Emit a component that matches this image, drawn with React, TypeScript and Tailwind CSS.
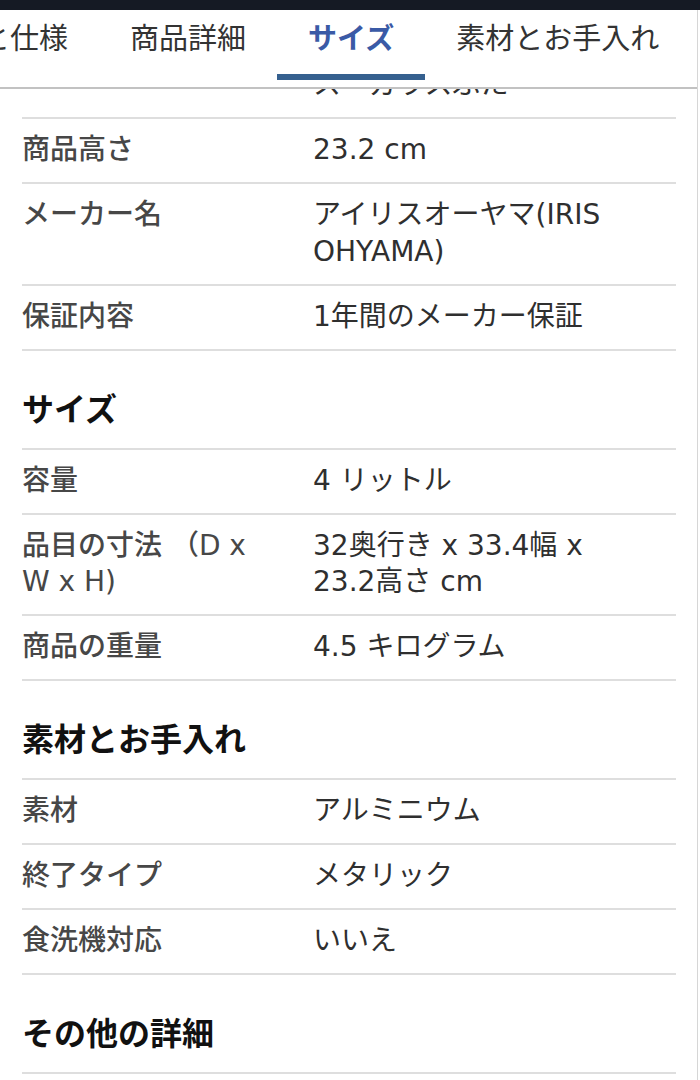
import React from "react";

type Row = { label: string[]; value: string[] };
type Section = { title?: string; rows: Row[] };

const sections: Section[] = [
  {
    rows: [
      { label: ["商品高さ"], value: ["23.2 cm"] },
      { label: ["メーカー名"], value: ["アイリスオーヤマ(IRIS", "OHYAMA)"] },
      { label: ["保証内容"], value: ["1年間のメーカー保証"] },
    ],
  },
  {
    title: "サイズ",
    rows: [
      { label: ["容量"], value: ["4 リットル"] },
      { label: ["品目の寸法 （D x", "W x H)"], value: ["32奥行き x 33.4幅 x", "23.2高さ cm"] },
      { label: ["商品の重量"], value: ["4.5 キログラム"] },
    ],
  },
  {
    title: "素材とお手入れ",
    rows: [
      { label: ["素材"], value: ["アルミニウム"] },
      { label: ["終了タイプ"], value: ["メタリック"] },
      { label: ["食洗機対応"], value: ["いいえ"] },
    ],
  },
  {
    title: "その他の詳細",
    rows: [{ label: ["ブランド名"], value: ["アイリスオーヤマ(IRIS OHYAMA)"] }],
  },
];

const tabs = [
  { name: "と仕様", active: false },
  { name: "商品詳細", active: false },
  { name: "サイズ", active: true },
  { name: "素材とお手入れ", active: false },
];

function Lines({ lines }: { lines: string[] }) {
  return (
    <>
      {lines.map((l, i) => (
        <div key={i} className="whitespace-nowrap">
          {l}
        </div>
      ))}
    </>
  );
}

function SpecRow({ row }: { row: Row }) {
  return (
    <div className="flex border-b-2 border-[#dedede] py-[13.25px] text-[28px] leading-[36.5px]">
      <div className="w-[291px] shrink-0 font-medium text-[#474747]">
        <Lines lines={row.label} />
      </div>
      <div className="flex-1 min-w-0 font-normal text-[#2f2f2f]">
        <Lines lines={row.value} />
      </div>
    </div>
  );
}

export default function App() {
  return (
    <div className="w-[700px] h-[1080px] overflow-hidden bg-white font-['DejaVu_Sans','Noto_Sans_CJK_JP',sans-serif]">
      <div className="h-[10px] bg-[#151a24]" />
      <div className="flex">
        <div className="flex-1 min-w-0 mr-[2px] border-r border-[#d6d6d6]">
          {/* Tab bar */}
          <div className="flex overflow-hidden border-b-2 border-[#c2c2c2]">
            <div className="flex shrink-0 ml-[-50px]">
              {tabs.map((t) => (
                <div key={t.name} className="flex flex-col shrink-0 mb-[7px]">
                  <div
                    className={
                      t.active
                        ? "px-[31px] pt-[10.5px] pb-[17.5px] text-[29px] leading-[36px] whitespace-nowrap font-bold text-[#3a5aa6]"
                        : "px-[31px] pt-[10.5px] pb-[17.5px] text-[29px] leading-[36px] whitespace-nowrap font-normal text-[#333333]"
                    }
                  >
                    {t.name}
                  </div>
                  <div className={t.active ? "h-[6px] bg-[#35608f]" : "h-[6px]"} />
                </div>
              ))}
            </div>
          </div>

          {/* Clipped previous row under the tab bar */}
          <div className="px-[22px] pr-[21px]">
            <div className="h-[28px] overflow-hidden flex flex-col justify-end border-b-2 border-[#dedede] box-content">
              <div className="flex pb-[13.25px] text-[28px] leading-[36.5px]">
                <div className="w-[291px] shrink-0" />
                <div className="flex-1 min-w-0 text-[#2f2f2f] whitespace-nowrap">ス・ガラスぶた</div>
              </div>
            </div>

            {sections.map((s, si) => (
              <div key={si}>
                {s.title && (
                  <div className="border-b-2 border-[#dedede] pt-[39px] pb-[18px] text-[32px] leading-[40px] font-bold text-[#111111]">
                    {s.title}
                  </div>
                )}
                {s.rows.map((r, ri) => (
                  <SpecRow key={ri} row={r} />
                ))}
              </div>
            ))}
          </div>
        </div>
      </div>
    </div>
  );
}
